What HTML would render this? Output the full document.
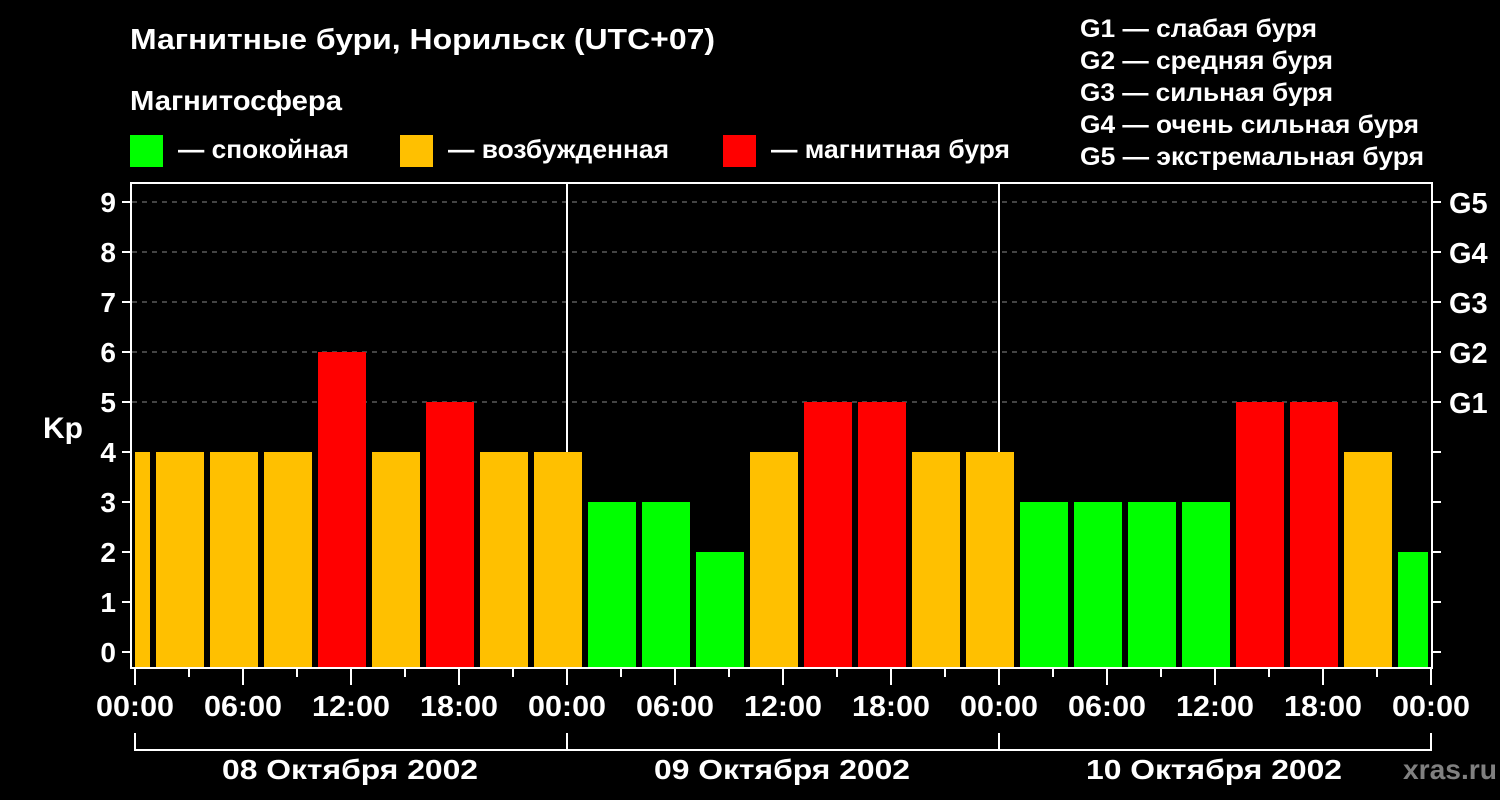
<!DOCTYPE html>
<html><head><meta charset="utf-8"><style>html,body{margin:0;padding:0;background:#000;}svg{display:block}</style></head>
<body>
<svg width="1500" height="800" xmlns="http://www.w3.org/2000/svg" font-family="Liberation Sans, sans-serif" font-weight="bold" fill="#fff">
<rect width="1500" height="800" fill="#000"/>
<text x="130" y="49" font-size="29" textLength="585" lengthAdjust="spacingAndGlyphs">Магнитные бури, Норильск (UTC+07)</text>
<text x="130" y="110" font-size="28" textLength="212" lengthAdjust="spacingAndGlyphs">Магнитосфера</text>
<rect x="130" y="135" width="33" height="32" fill="#00ff00"/>
<text x="178" y="158" font-size="26" textLength="171" lengthAdjust="spacingAndGlyphs">— спокойная</text>
<rect x="400" y="135" width="33" height="32" fill="#ffc000"/>
<text x="448" y="158" font-size="26" textLength="221" lengthAdjust="spacingAndGlyphs">— возбужденная</text>
<rect x="723" y="135" width="33" height="32" fill="#ff0000"/>
<text x="771" y="158" font-size="26" textLength="239" lengthAdjust="spacingAndGlyphs">— магнитная буря</text>
<g font-size="25">
<text x="1080" y="37" textLength="237" lengthAdjust="spacingAndGlyphs">G1 — слабая буря</text>
<text x="1080" y="69" textLength="253" lengthAdjust="spacingAndGlyphs">G2 — средняя буря</text>
<text x="1080" y="101" textLength="253" lengthAdjust="spacingAndGlyphs">G3 — сильная буря</text>
<text x="1080" y="133" textLength="339" lengthAdjust="spacingAndGlyphs">G4 — очень сильная буря</text>
<text x="1080" y="165" textLength="344" lengthAdjust="spacingAndGlyphs">G5 — экстремальная буря</text>
</g>
<g stroke="#888" stroke-width="1" stroke-dasharray="5,5">
<line x1="132" y1="202" x2="1431" y2="202"/><line x1="132" y1="252" x2="1431" y2="252"/>
<line x1="132" y1="302" x2="1431" y2="302"/><line x1="132" y1="352" x2="1431" y2="352"/>
<line x1="132" y1="402" x2="1431" y2="402"/>
</g>
<g stroke="#fff" stroke-width="2"><line x1="567" y1="183" x2="567" y2="668"/><line x1="999" y1="183" x2="999" y2="668"/></g>
<g id="bars"></g>
<rect x="131" y="183" width="1301" height="485" fill="none" stroke="#fff" stroke-width="2"/>
<g id="ticks" stroke="#fff" stroke-width="2"></g>
<g id="labels"></g>
<text x="43" y="438" font-size="30">Kp</text>
<g stroke="#fff" stroke-width="2" fill="none"><polyline points="135,733 135,750 1431,750 1431,733"/><line x1="567" y1="733" x2="567" y2="750"/><line x1="999" y1="733" x2="999" y2="750"/></g>
<g font-size="28" text-anchor="middle">
<text x="350" y="779" textLength="256" lengthAdjust="spacingAndGlyphs">08 Октября 2002</text>
<text x="782" y="779" textLength="256" lengthAdjust="spacingAndGlyphs">09 Октября 2002</text>
<text x="1214" y="779" textLength="256" lengthAdjust="spacingAndGlyphs">10 Октября 2002</text>
</g>
<text x="1403" y="779" font-size="28" fill="#808080" textLength="94" lengthAdjust="spacingAndGlyphs">xras.ru</text>
<script>
var ns="http://www.w3.org/2000/svg";
function el(p,t,a,txt){var e=document.createElementNS(ns,t);for(var k in a)e.setAttribute(k,a[k]);if(txt)e.textContent=txt;document.getElementById(p).appendChild(e);}
var v=[4,4,4,4,6,4,5,4,4,3,3,2,4,5,5,4,4,3,3,3,3,5,5,4,2];
for(var i=0;i<25;i++){var x1=102+54*i,x2=x1+48;if(x1<135)x1=135;if(x2>1428)x2=1428;
var c=v[i]<4?"#00ff00":(v[i]==4?"#ffc000":"#ff0000");var y=652-50*v[i];
el("bars","rect",{x:x1,y:y,width:x2-x1,height:668-y,fill:c});}
for(var k=0;k<=9;k++){var y=652-50*k;el("ticks","line",{x1:122,y1:y,x2:131,y2:y});el("ticks","line",{x1:1432,y1:y,x2:1441,y2:y});
el("labels","text",{x:116,y:y+10,"font-size":28,"text-anchor":"end"},""+k);}
for(var k=5;k<=9;k++){el("labels","text",{x:1449,y:652-50*k+11,"font-size":29},"G"+(k-4));}
var tl=["00:00","06:00","12:00","18:00"];
for(var j=0;j<=24;j++){var x=135+54*j;el("ticks","line",{x1:x,y1:669,x2:x,y2:j%2?677:685});
if(j%2==0)el("labels","text",{x:x,y:716,"font-size":29,"text-anchor":"middle",textLength:78,lengthAdjust:"spacingAndGlyphs"},tl[(j/2)%4]);}
</script>
</svg>
</body></html>
